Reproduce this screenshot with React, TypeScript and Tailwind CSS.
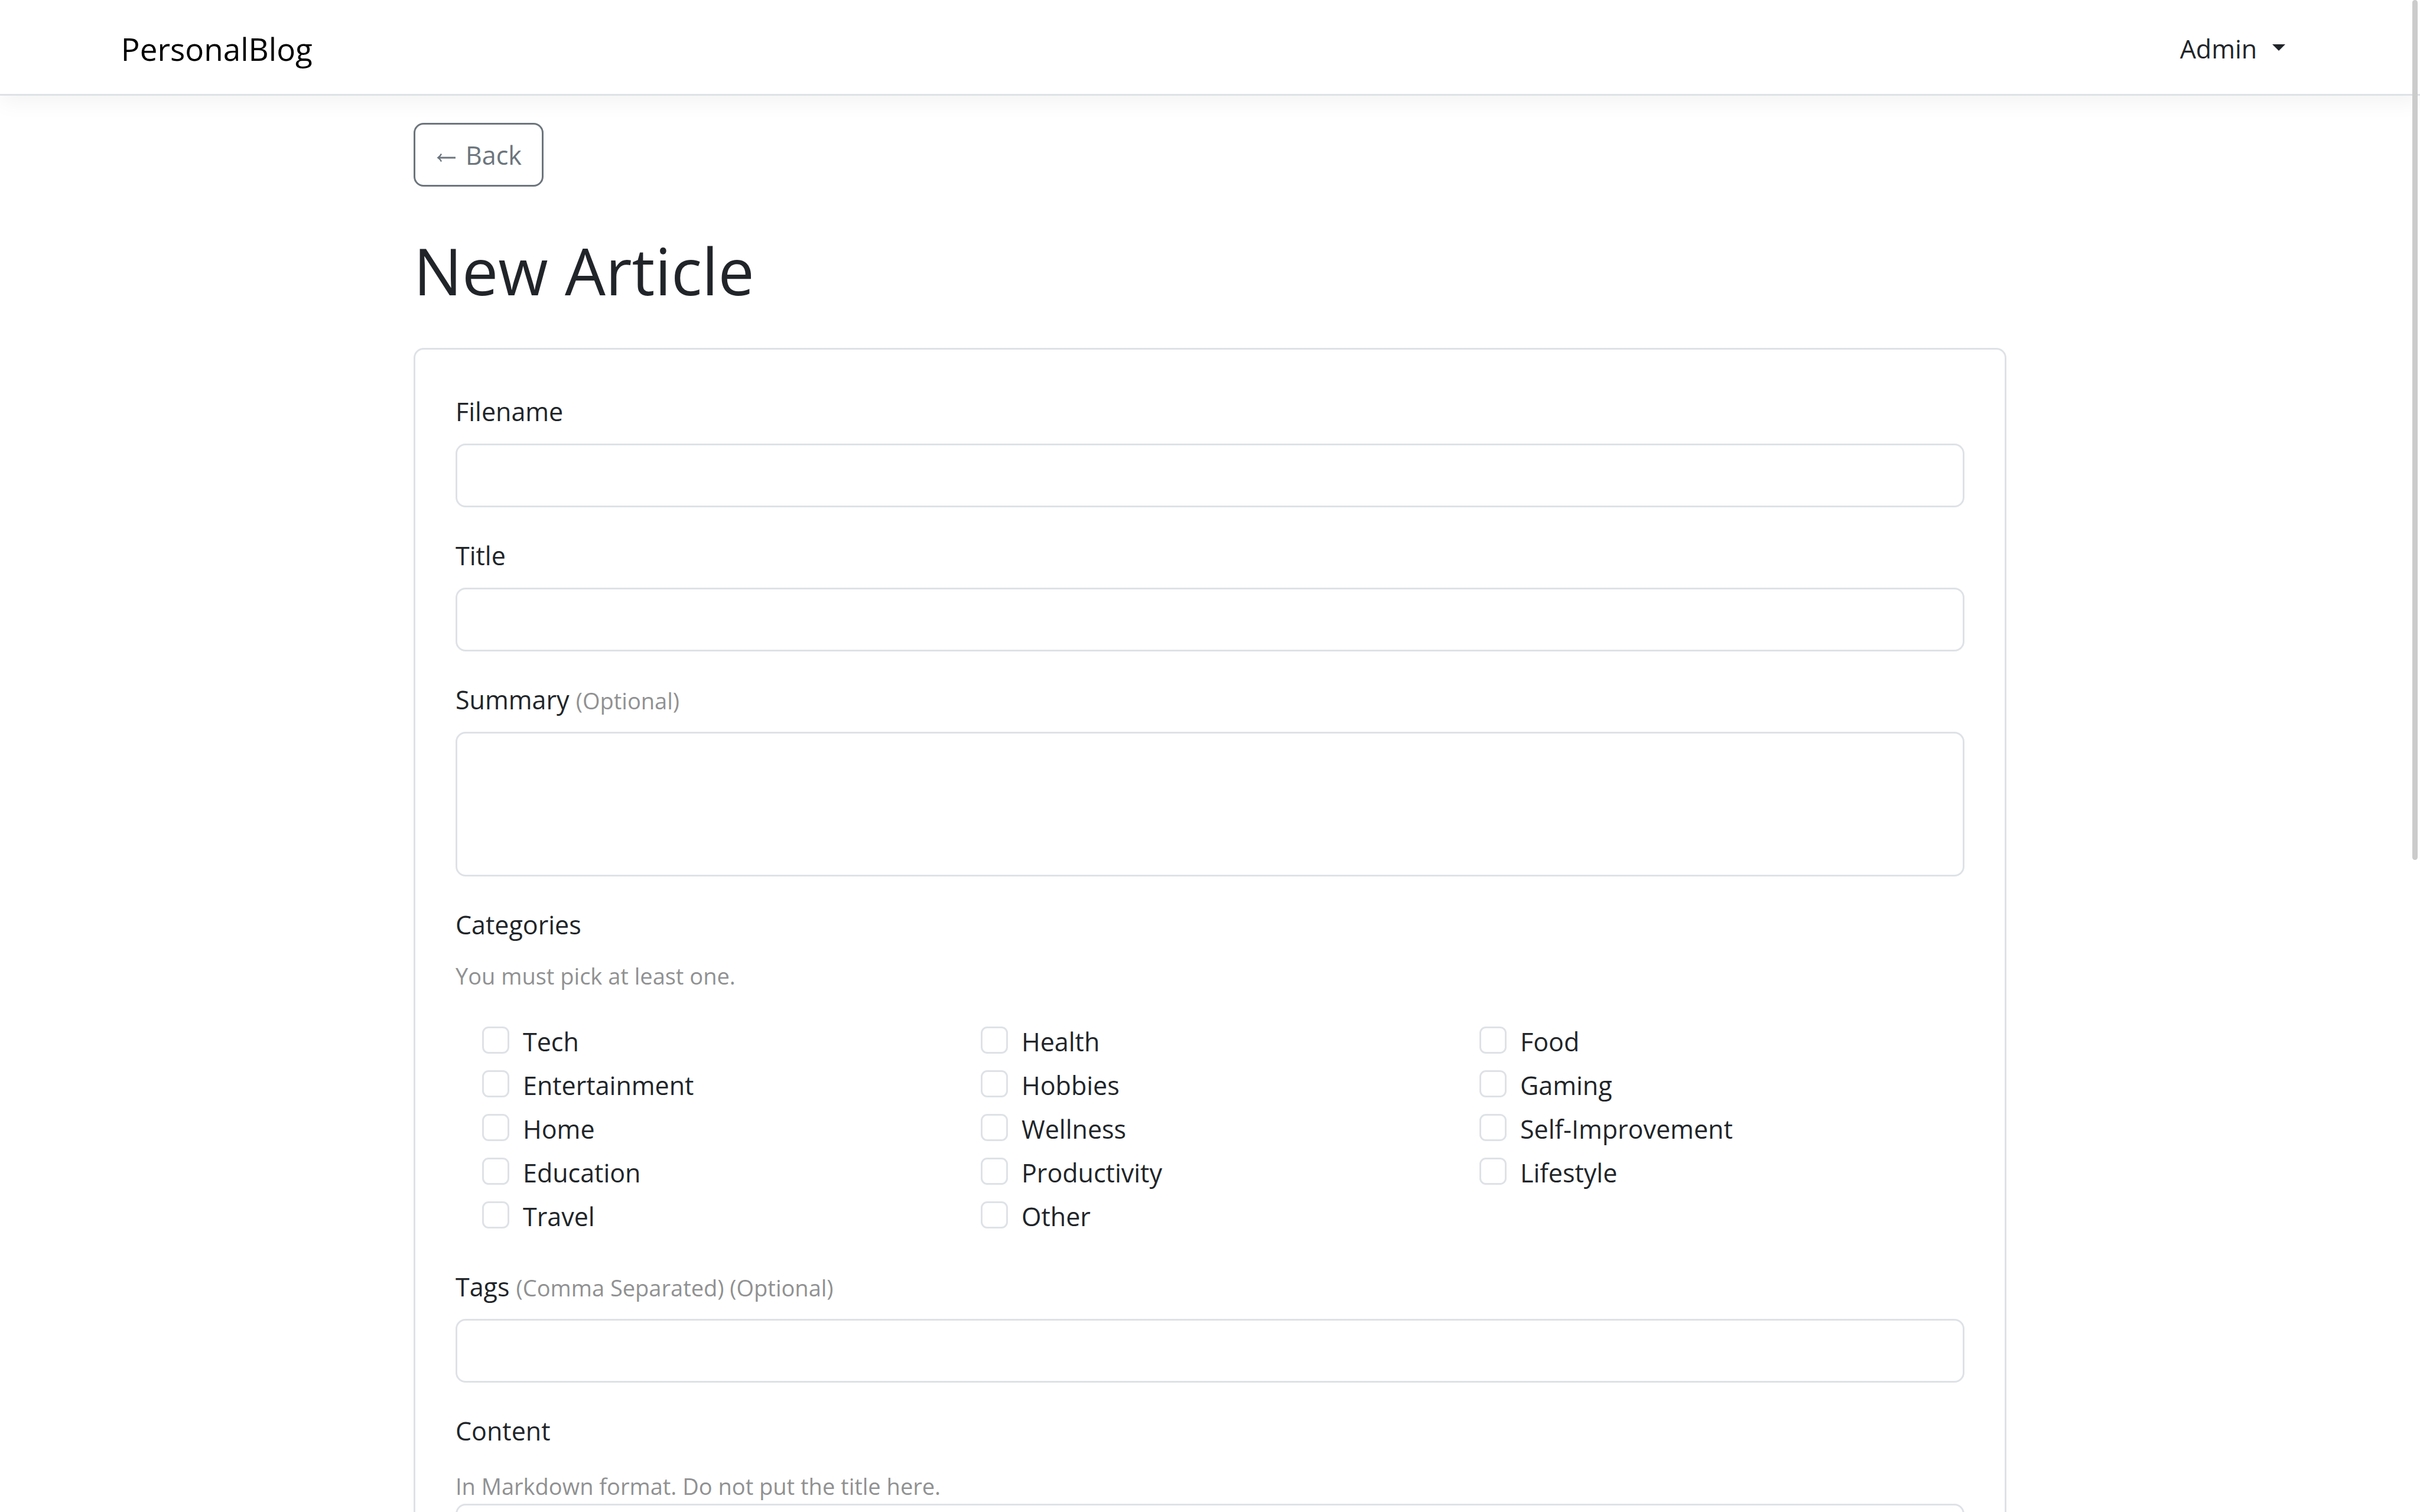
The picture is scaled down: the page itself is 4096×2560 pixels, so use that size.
import type { ReactNode } from "react";

const categoryColumns = [
  ["Tech", "Entertainment", "Home", "Education", "Travel"],
  ["Health", "Hobbies", "Wellness", "Productivity", "Other"],
  ["Food", "Gaming", "Self-Improvement", "Lifestyle"],
];

const controlClass =
  "block w-full rounded-[17px] border-[3px] border-[#dee2e6] bg-white px-[34px] text-[43px] outline-none";

function Hint({ children }: { children: ReactNode }) {
  return <span className="text-[38px] leading-none text-[#909192]">{children}</span>;
}

function FieldLabel({ htmlFor, children }: { htmlFor: string; children: ReactNode }) {
  return (
    <label htmlFor={htmlFor} className="mb-[18px] block leading-[73px]">
      {children}
    </label>
  );
}

function CategoryOption({ name }: { name: string }) {
  return (
    <label className="flex items-start leading-[74px]">
      <input
        type="checkbox"
        name="categories"
        value={name}
        className="mt-[11px] mr-[23px] size-[46px] shrink-0 appearance-none rounded-[11px] border-[3px] border-[#dee2e6] bg-white checked:bg-[#0d6efd]"
      />
      {name}
    </label>
  );
}

function BackArrow() {
  return (
    <svg
      viewBox="0 0 34 16"
      className="mt-1.5 mr-[17px] h-[16px] w-[34px]"
      fill="none"
      stroke="currentColor"
      aria-hidden="true"
    >
      <path d="M4.5 8H34" strokeWidth="3" />
      <path d="M10 1.5C8.8 4.2 7 6.4 4.5 8C7 9.6 8.8 11.8 10 14.5" strokeWidth="2.4" />
    </svg>
  );
}

function NavBar() {
  return (
    <header className="flex h-[162px] items-center justify-between border-b-[3px] border-[#dee2e6] bg-white px-[5%] pt-1.5 shadow-[0_11px_34px_rgba(0,0,0,0.05)]">
      <a href="#" className="text-[53px] leading-[80px] text-black">
        PersonalBlog
      </a>
      <button type="button" className="mr-[23px] flex items-center gap-[26px] leading-[68px]">
        Admin
        <span className="mb-1 border-x-[11px] border-t-[11px] border-x-transparent border-t-[#212529]" />
      </button>
    </header>
  );
}

export default function App() {
  return (
    <div className="relative h-screen overflow-hidden bg-white font-['Open_Sans',sans-serif] text-[43px] text-[#212529]">
      <NavBar />
      <main className="mx-auto w-full max-w-[2696px] pt-[46px]">
        <button
          type="button"
          className="flex h-[108px] items-center rounded-[17px] border-[3px] border-[#6c757d] px-[34px] pt-[3px] text-[#6c757d]"
        >
          <BackArrow />
          Back
        </button>
        <h1 className="mt-[73px] mb-[63px] text-[109px] leading-[137px]">New Article</h1>

        <form className="rounded-[17px] border-[3px] border-[#dee2e6] p-[68px]">
          <div className="mb-[45px]">
            <FieldLabel htmlFor="filename">Filename</FieldLabel>
            <input id="filename" type="text" className={`${controlClass} h-[108px]`} />
          </div>

          <div className="mb-[45px]">
            <FieldLabel htmlFor="title">Title</FieldLabel>
            <input id="title" type="text" className={`${controlClass} h-[108px]`} />
          </div>

          <div className="mb-[45px]">
            <FieldLabel htmlFor="summary">
              Summary <Hint>(Optional)</Hint>
            </FieldLabel>
            <textarea id="summary" className={`${controlClass} h-[245px] resize-none`} />
          </div>

          <fieldset className="mb-[45px]">
            <legend className="mb-[19px] leading-[74px]">Categories</legend>
            <p className="text-[38px] leading-[60px] text-[#909192]">You must pick at least one.</p>
            <div className="mt-[45px] grid grid-cols-3 px-[11px]">
              {categoryColumns.map((column) => (
                <div key={column[0]} className="px-[34px]">
                  {column.map((name) => (
                    <CategoryOption key={name} name={name} />
                  ))}
                </div>
              ))}
            </div>
          </fieldset>

          <div className="mb-[45px]">
            <FieldLabel htmlFor="tags">
              Tags <Hint>(Comma Separated) (Optional)</Hint>
            </FieldLabel>
            <input id="tags" type="text" className={`${controlClass} h-[108px]`} />
          </div>

          <div>
            <label htmlFor="content" className="mb-[26px] block leading-[74px]">
              Content
            </label>
            <p className="text-[38px] leading-[60px] text-[#909192]">
              In Markdown format. Do not put the title here.
            </p>
            <textarea id="content" className={`${controlClass} h-[1100px] resize-none`} />
          </div>
        </form>
      </main>

      <div className="absolute top-0 right-1 h-[1456px] w-[9px] rounded-full bg-[#cbcbcb]" />
    </div>
  );
}
